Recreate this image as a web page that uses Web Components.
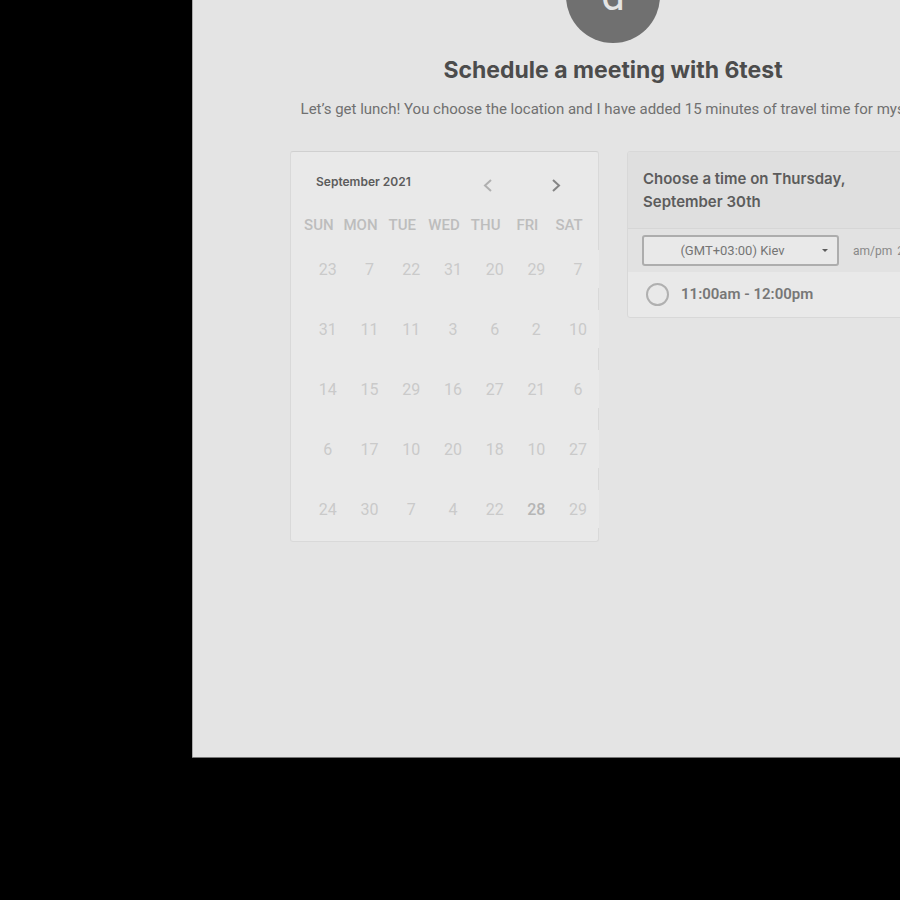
<!DOCTYPE html>
<html lang="en">
<head>
<meta charset="utf-8">
<title>Schedule a meeting</title>
<style>
html, body { margin: 0; background: #000; overflow: hidden; }
body { min-height: 100vh; font-family: Roboto, "Liberation Sans", sans-serif; color: #6b6b6b; }
</style>
</head>
<body>
<booking-page>
  <user-avatar slot="avatar">d</user-avatar>
  <span slot="title">Schedule a meeting with 6test</span>
  <span slot="description">Let’s get lunch! You choose the location and I have added 15 minutes of travel time for myself.</span>
  <month-calendar></month-calendar>
  <time-picker>
    <span slot="heading">Choose a time on Thursday, September 30th</span>
    <time-slot>11:00am - 12:00pm</time-slot>
  </time-picker>
</booking-page>
<script>
const define = (name, html) => customElements.define(name, class extends HTMLElement {
  constructor() {
    super();
    const t = document.createElement('template');
    t.innerHTML = html;
    this.attachShadow({ mode: 'open' }).append(t.content.cloneNode(true));
  }
});

define('booking-page', `
<style>
:host { display: block; box-sizing: border-box; margin: -51px -134px 0 192px; min-height: calc(100vh - 91px);
  padding: 0 98px; background: #e4e4e4; border-bottom: 1px solid #777; box-shadow: inset 1px 0 #aaa; }
header { text-align: center; }
h1 { margin: 12px 0 0; font: 700 23px/30px Inter, sans-serif; color: #4c4c4c; }
p { margin: 14px 0 0; font-size: 15px; line-height: 20px; color: #707070; white-space: nowrap; }
main { display: grid; grid-template-columns: 1fr 1fr; gap: 28px; align-items: start; margin-top: 32px; }
</style>
<header><slot name="avatar"></slot><h1><slot name="title"></slot></h1><p><slot name="description"></slot></p></header>
<main><slot></slot></main>`);

define('user-avatar', `
<style>
:host { display: block; width: 94px; margin: 0 auto; border-radius: 50%; background: #707070; color: #e4e4e4;
  font-size: 42px; font-weight: 400; line-height: 94px; text-align: center; }
</style><slot></slot>`);

const weeks = [[23,7,22,31,20,29,7],[31,11,11,3,6,2,10],[14,15,29,16,27,21,6],[6,17,10,20,18,10,27],[24,30,7,4,22,28,29]];
const days = ['SUN','MON','TUE','WED','THU','FRI','SAT'];
define('month-calendar', `
<style>
:host { display: block; box-sizing: border-box; padding: 20px 8px 2px 7px; background: #e9e9e9; border: 1px solid #d9d9d9;
  border-top-color: #d0d0d0; border-radius: 3px; }
.bar { display: flex; align-items: flex-start; padding: 0 22px 0 18px; }
h2 { flex: 1; margin: 0; font: 600 12px/20px Inter, sans-serif; color: #5c5c5c; }
nav { display: flex; gap: 44px; padding-top: 1px; }
button { font: inherit; color: inherit; border: 0; padding: 0; background: #e9e9e9; }
nav button { display: grid; place-items: center; width: 24px; height: 24px; color: #b0b0b0; }
nav button + button { color: #858585; }
svg { display: block; fill: none; stroke: currentColor; stroke-width: 2; }
table { width: 100%; table-layout: fixed; border-collapse: collapse; }
th { box-sizing: border-box; height: 42px; padding: 13px 0 0; font-size: 15px; line-height: 20px; font-weight: 500; color: #bdbdbd; }
td { height: 60px; padding: 0; font-size: 16px; color: #cacaca; }
td button { display: block; width: 100%; height: 38px; margin-left: 9px; }
td .today { color: #b5b5b5; font-weight: 500; }
</style>
<div class="bar"><h2>September 2021</h2><nav>
<button aria-label="Previous month"><svg width="12" height="14"><path d="M9 2 3 7.500 9 13"/></svg></button>
<button aria-label="Next month"><svg width="12" height="14"><path d="M3 2 9 7.500 3 13"/></svg></button></nav></div>
<table><thead><tr>${days.map(d => `<th scope="col">${d}</th>`).join('')}</tr></thead>
<tbody>${weeks.map(w => `<tr>${w.map(d => `<td><button${d === 28 ? ' class="today"' : ''}>${d}</button></td>`).join('')}</tr>`).join('')}</tbody></table>`);

define('time-picker', `
<style>
:host { display: block; background: #e9e9e9; border: 1px solid #d8d8d8; border-radius: 3px; overflow: hidden; }
h2 { margin: 0; padding: 15px 48px 15px 15px; background: #dfdfdf; border-bottom: 1px solid #d6d6d6;
  font: 600 15px/23px Inter, sans-serif; color: #5c5c5c; }
.zone { display: flex; align-items: center; gap: 5px; padding: 6px 14px; background: #e2e2e2; font-size: 12px; white-space: nowrap; color: #888; }
.field { display: grid; flex: none; width: 197px; margin-right: 9px; }
.field > * { grid-area: 1 / 1; }
select { appearance: none; box-sizing: border-box; width: 100%; height: 31px; padding: 0 33px 1px 17px; border: 2px solid #adadad;
  border-radius: 3px; background: #e9e9e9; font: 13px Roboto, sans-serif; color: #757575; text-align: center; text-align-last: center; }
.field svg { place-self: center end; margin-right: 10px; fill: #5c5c5c; pointer-events: none; }
</style>
<h2><slot name="heading"></slot></h2>
<div class="zone"><div class="field"><select aria-label="Time zone"><option>(GMT+03:00) Kiev</option></select>
<svg width="8" height="5"><path d="M1 1h6L4 4z"/></svg></div><span>am/pm</span><span>24hr</span></div>
<slot></slot>`);

define('time-slot', `
<style>
:host { display: block; }
label { display: flex; align-items: center; gap: 12px; padding: 11px 18px; font: 600 15px/23px Roboto, sans-serif; color: #777; }
input { appearance: none; box-sizing: border-box; width: 23px; height: 23px; margin: 0; border: 2px solid #b0b0b0; border-radius: 50%; }
</style>
<label><input type="radio" name="slot"><span><slot></slot></span></label>`);
</script>
</body>
</html>
